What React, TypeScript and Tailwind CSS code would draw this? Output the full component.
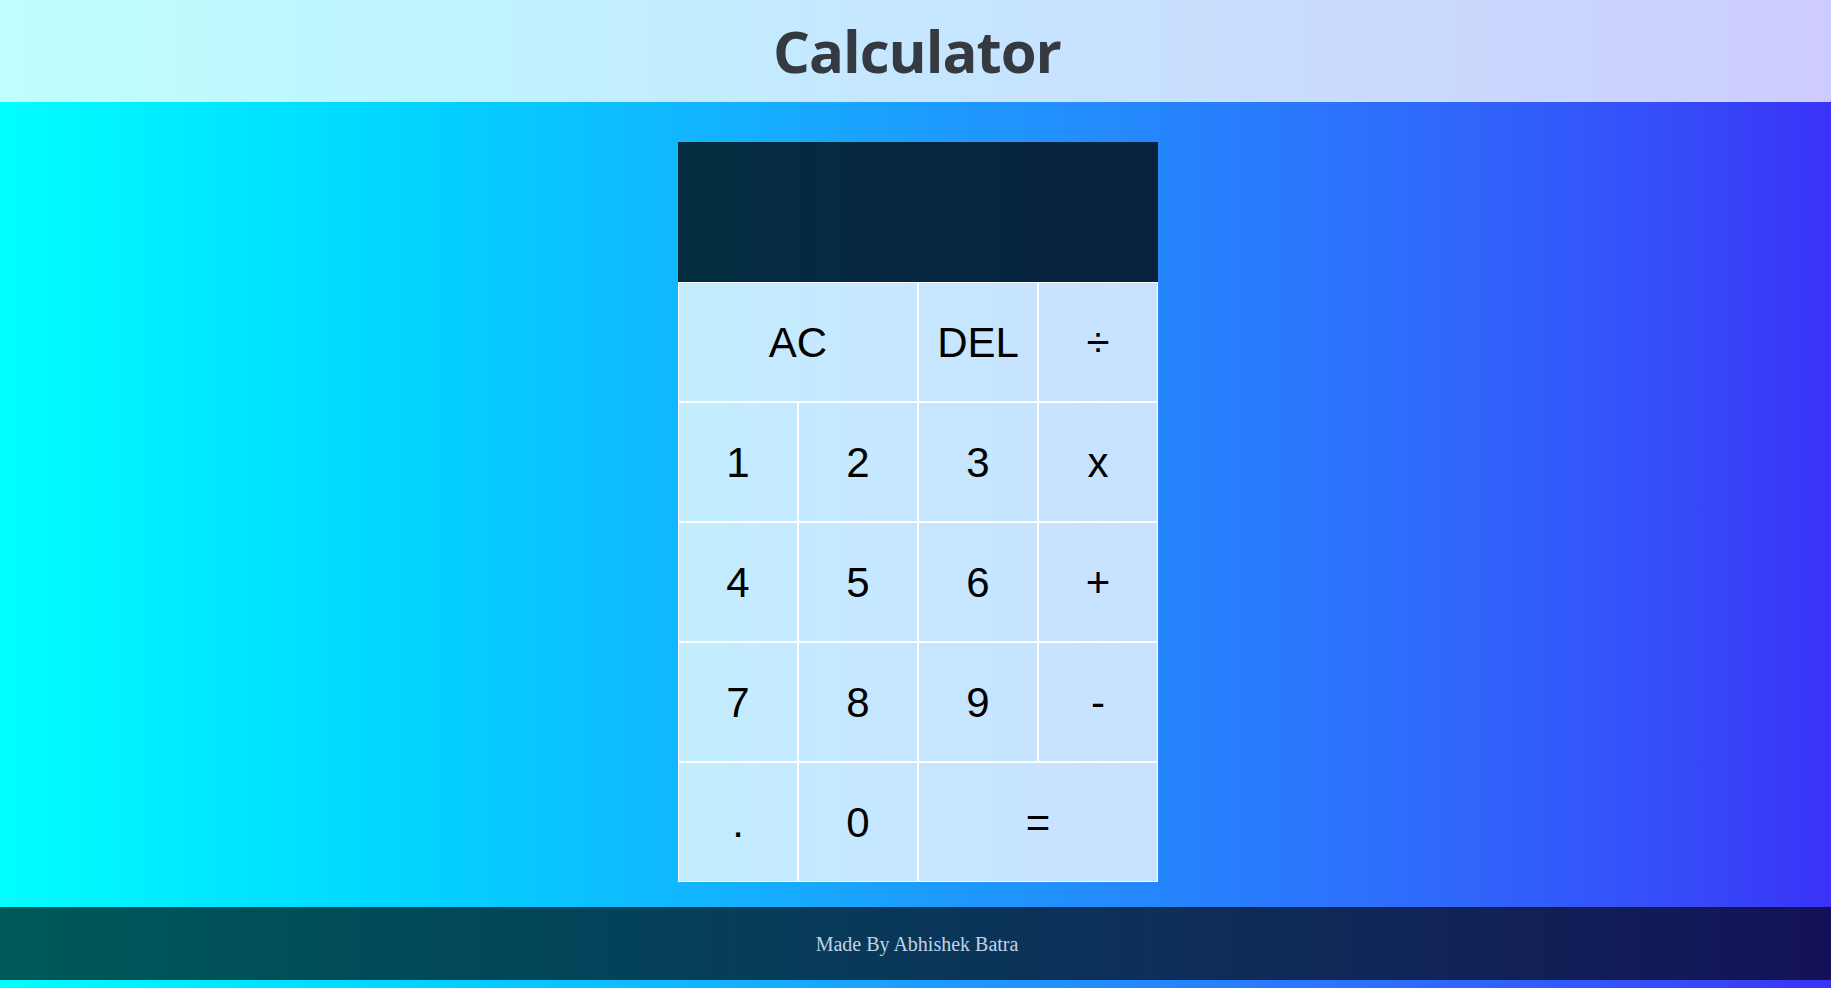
import React from "react"

const keys: { label: string; wide?: boolean }[] = [
  { label: "AC", wide: true },
  { label: "DEL" },
  { label: "÷" },
  { label: "1" },
  { label: "2" },
  { label: "3" },
  { label: "x" },
  { label: "4" },
  { label: "5" },
  { label: "6" },
  { label: "+" },
  { label: "7" },
  { label: "8" },
  { label: "9" },
  { label: "-" },
  { label: "." },
  { label: "0" },
  { label: "=", wide: true },
]

export default function App() {
  return (
    <div className="min-h-[988px] w-full bg-gradient-to-r from-[#00ffff] via-[#1c9dfe] to-[#3a32f7] flex flex-col">
      {/* Header */}
      <header className="h-[102px] bg-white/75 flex items-center justify-center">
        <h1 className="text-[58px] font-bold text-[#343a40] leading-none font-['Open_Sans',sans-serif] tracking-[-1px] pl-[3px]">
          Calculator
        </h1>
      </header>

      {/* Calculator */}
      <main className="flex justify-center pt-[40px] pb-[25px] pl-[5px]">
        <div className="grid grid-cols-[repeat(4,120px)] grid-rows-[140px_repeat(5,120px)]">
          <div className="col-span-4 bg-black/75" />
          {keys.map((k) => (
            <button
              key={k.label}
              className={`${k.wide ? "col-span-2" : ""} bg-white/75 border border-white text-black text-[42px] font-['Liberation_Sans',Arial,sans-serif] flex items-center justify-center cursor-pointer`}
            >
              {k.label}
            </button>
          ))}
        </div>
      </main>

      {/* Footer */}
      <footer className="h-[73px] bg-black/65 flex items-center justify-center">
        <p className="text-[20px] text-[#c3d3e6] font-['Liberation_Serif',serif] pl-[3px]">Made By Abhishek Batra</p>
      </footer>
    </div>
  )
}
